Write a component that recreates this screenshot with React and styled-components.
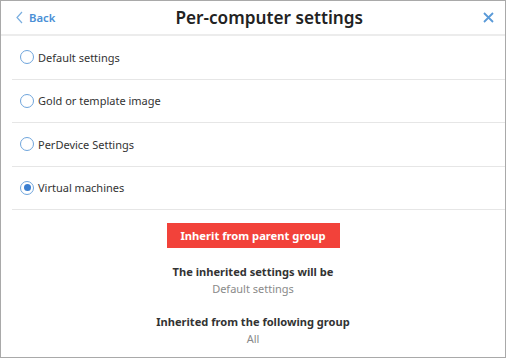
import React, { useState } from "react";
import styled, { createGlobalStyle } from "styled-components";

const Global = createGlobalStyle`
  html, body { margin: 0; padding: 0; background: #fff; }
  body { font-family: "Noto Sans", "Open Sans", sans-serif; }
  * { box-sizing: border-box; }
`;

const Frame = styled.div`
  width: 506px;
  height: 358px;
  border: 1px solid #a9a9a9;
  background: #fff;
  display: flex;
  flex-direction: column;
`;

const Header = styled.div`
  height: 35px;
  border-bottom: 2px solid #ececec;
  display: grid;
  grid-template-columns: auto 1fr auto;
  align-items: center;
  padding: 0 11px 0 15px;
`;

const BackButton = styled.button`
  display: flex;
  align-items: center;
  gap: 6px;
  border: none;
  background: none;
  padding: 0;
  color: #4a8fd6;
  font-family: inherit;
  font-size: 11.3px;
  font-weight: 600;
  cursor: pointer;
`;

const Title = styled.h1`
  margin: 0;
  text-align: center;
  font-size: 17.2px;
  font-weight: 600;
  color: #222;
`;

const CloseButton = styled.button`
  border: none;
  background: none;
  padding: 0;
  display: flex;
  cursor: pointer;
`;

const List = styled.div`
  margin-left: 11px;
  display: flex;
  flex-direction: column;
`;

const Row = styled.label`
  height: 43.5px;
  border-bottom: 1px solid #e6e6e6;
  display: flex;
  align-items: center;
  gap: 4px;
  padding-left: 8px;
  font-size: 11px;
  color: #333;
  cursor: pointer;
`;

const Radio = styled.span`
  width: 14px;
  height: 14px;
  border-radius: 50%;
  border: 1.3px solid #6fa5dc;
  display: flex;
  align-items: center;
  justify-content: center;
  flex-shrink: 0;
  &::after {
    content: "";
    width: 7px;
    height: 7px;
    border-radius: 50%;
    background: #3a7ed0;
    display: ${(p) => (p.checked ? "block" : "none")};
  }
`;

const Footer = styled.div`
  display: flex;
  flex-direction: column;
  align-items: center;
  padding-top: 13px;
`;

const InheritButton = styled.button`
  width: 173px;
  height: 25px;
  border: none;
  background: #f2423a;
  color: #fff;
  font-family: inherit;
  font-size: 11.2px;
  font-weight: 700;
  cursor: pointer;
  margin-bottom: 15px;
`;

const InfoLabel = styled.div`
  font-size: 11.1px;
  font-weight: 700;
  color: #333;
  line-height: 17px;
`;

const InfoValue = styled.div`
  font-size: 11px;
  color: #8a8a8a;
  line-height: 17px;
  margin-bottom: ${(p) => p.gap || 0}px;
`;

const options = [
  "Default settings",
  "Gold or template image",
  "PerDevice Settings",
  "Virtual machines",
];

export default function App() {
  const [selected, setSelected] = useState(3);
  return (
    <>
      <Global />
      <Frame>
        <Header>
          <BackButton>
            <svg width="7" height="13" viewBox="0 0 7 13">
              <path d="M6 1 L1 6.5 L6 12" fill="none" stroke="#7aaee0" strokeWidth="1.2" />
            </svg>
            Back
          </BackButton>
          <Title>Per-computer settings</Title>
          <CloseButton>
            <svg width="11" height="11" viewBox="0 0 11 11">
              <path d="M1 1 L10 10 M10 1 L1 10" stroke="#5a9ad8" strokeWidth="1.8" />
            </svg>
          </CloseButton>
        </Header>
        <List>
          {options.map((o, i) => (
            <Row key={o} onClick={() => setSelected(i)}>
              <Radio checked={selected === i} />
              {o}
            </Row>
          ))}
        </List>
        <Footer>
          <InheritButton>Inherit from parent group</InheritButton>
          <InfoLabel>The inherited settings will be</InfoLabel>
          <InfoValue gap={16}>Default settings</InfoValue>
          <InfoLabel>Inherited from the following group</InfoLabel>
          <InfoValue>All</InfoValue>
        </Footer>
      </Frame>
    </>
  );
}
